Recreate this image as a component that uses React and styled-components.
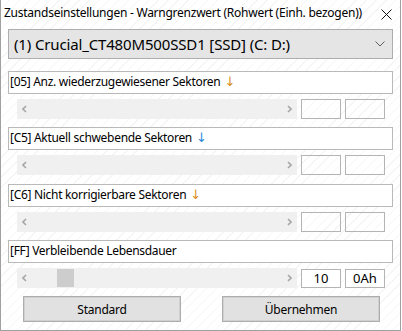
import React from "react";
import styled, { createGlobalStyle } from "styled-components";

const Global = createGlobalStyle`
  html, body { margin: 0; padding: 0; background: #fff; }
  body { font-family: "Noto Sans", "Open Sans", sans-serif; }
`;

const Window = styled.div`
  box-sizing: border-box;
  width: 401px;
  height: 331px;
  border-left: 1px solid #a0a0a0;
  border-right: 1px solid #a0a0a0;
  border-bottom: 1px solid #a0a0a0;
  background: repeating-linear-gradient(135deg, #fff 0 6px, #f5f5f5 6px 7px);
  display: flex;
  flex-direction: column;
`;

const TitleBar = styled.div`
  height: 29px;
  display: flex;
  align-items: flex-start;
  justify-content: space-between;
  padding: 5px 8px 0 3px;
  box-sizing: border-box;
`;

const Title = styled.span`
  font-size: 12px;
  line-height: 16px;
  color: #000;
  letter-spacing: -0.25px;
`;

const CloseIcon = styled.svg`
  margin-top: 4px;
  width: 11px;
  height: 11px;
`;

const Body = styled.div`
  padding: 0 7px 0 7px;
  display: flex;
  flex-direction: column;
`;

const Combo = styled.div`
  box-sizing: border-box;
  height: 30px;
  border: 1px solid #adadad;
  background: #e5e5e5;
  display: flex;
  align-items: center;
  justify-content: space-between;
  padding: 0 7px 0 5px;
  font-size: 15px;
  letter-spacing: -0.15px;
  color: #000;
  margin-bottom: 12px;
`;

const Section = styled.div`
  display: flex;
  flex-direction: column;
  margin-bottom: ${(p) => p.$mb}px;
`;

const Label = styled.div`
  box-sizing: border-box;
  height: 23px;
  border: 1px solid #b9b9b9;
  background: #fff;
  font-size: 12px;
  line-height: 20px;
  padding-left: 1px;
  color: #000;
  letter-spacing: -0.3px;
`;

const Arrow = styled.span`
  font-family: "DejaVu Sans", sans-serif;
  font-size: 13px;
  color: ${(p) => p.$color};
  margin-left: 4px;
`;

const Controls = styled.div`
  display: flex;
  align-items: center;
  gap: 4px;
  margin-top: 5px;
  padding-left: 9px;
`;

const Scrollbar = styled.div`
  position: relative;
  width: 280px;
  height: 20px;
  background: #f0f0f0;
  display: flex;
  align-items: center;
  justify-content: space-between;
  padding: 0 5px;
  box-sizing: border-box;
`;

const Thumb = styled.div`
  position: absolute;
  left: 40px;
  top: 1px;
  width: 17px;
  height: 18px;
  background: #cdcdcd;
`;

const ValueBox = styled.div`
  box-sizing: border-box;
  width: 40px;
  height: ${(p) => (p.$filled ? 19 : 20)}px;
  border: 1px solid #b4b4b4;
  background: ${(p) => (p.$filled ? "#fff" : "transparent")};
  font-size: 13px;
  display: flex;
  align-items: center;
  justify-content: center;
  color: #000;
`;

const Buttons = styled.div`
  display: flex;
  justify-content: space-between;
  padding: 0 13px 0 15px;
  margin-top: 8px;
`;

const Button = styled.div`
  box-sizing: border-box;
  width: 158px;
  height: 26px;
  border: 1px solid #adadad;
  box-shadow: inset 0 0 0 1px #d0d0d0;
  background: #e1e1e1;
  font-size: 12px;
  letter-spacing: -0.25px;
  display: flex;
  align-items: center;
  justify-content: center;
  color: #000;
`;

const Chev = ({ dir }) => (
  <svg width="5" height="8" viewBox="0 0 5 8">
    <path
      d={dir === "l" ? "M4 1 L1 4 L4 7" : "M1 1 L4 4 L1 7"}
      fill="none"
      stroke="#a6a6a6"
      strokeWidth="1.6"
    />
  </svg>
);

const rows = [
  { label: "[05] Anz. wiederzugewiesener Sektoren", arrow: "#d9901a", mb: 8 },
  { label: "[C5] Aktuell schwebende Sektoren", arrow: "#2d8ad8", mb: 9 },
  { label: "[C6] Nicht korrigierbare Sektoren", arrow: "#d9901a", mb: 8 },
  { label: "[FF] Verbleibende Lebensdauer", thumb: true, v1: "10", v2: "0Ah", mb: 0 },
];

export default function App() {
  return (
    <>
      <Global />
      <Window>
        <TitleBar>
          <Title>Zustandseinstellungen - Warngrenzwert (Rohwert (Einh. bezogen))</Title>
          <CloseIcon viewBox="0 0 11 11">
            <path d="M0.5 0.5 L10.5 10.5 M10.5 0.5 L0.5 10.5" stroke="#111" strokeWidth="1" />
          </CloseIcon>
        </TitleBar>
        <Body>
          <Combo>
            <span>(1) Crucial_CT480M500SSD1 [SSD] (C: D:)</span>
            <svg width="10" height="6" viewBox="0 0 10 6">
              <path d="M0.5 0.5 L5 5 L9.5 0.5" fill="none" stroke="#606060" strokeWidth="1" />
            </svg>
          </Combo>
          {rows.map((r) => (
            <Section key={r.label} $mb={r.mb}>
              <Label>
                {r.label}
                {r.arrow && <Arrow $color={r.arrow}>↓</Arrow>}
              </Label>
              <Controls>
                <Scrollbar>
                  <Chev dir="l" />
                  {r.thumb && <Thumb />}
                  <Chev dir="r" />
                </Scrollbar>
                <ValueBox $filled={!!r.v1}>{r.v1}</ValueBox>
                <ValueBox $filled={!!r.v2}>{r.v2}</ValueBox>
              </Controls>
            </Section>
          ))}
          <Buttons>
            <Button>Standard</Button>
            <Button>Übernehmen</Button>
          </Buttons>
        </Body>
      </Window>
    </>
  );
}
